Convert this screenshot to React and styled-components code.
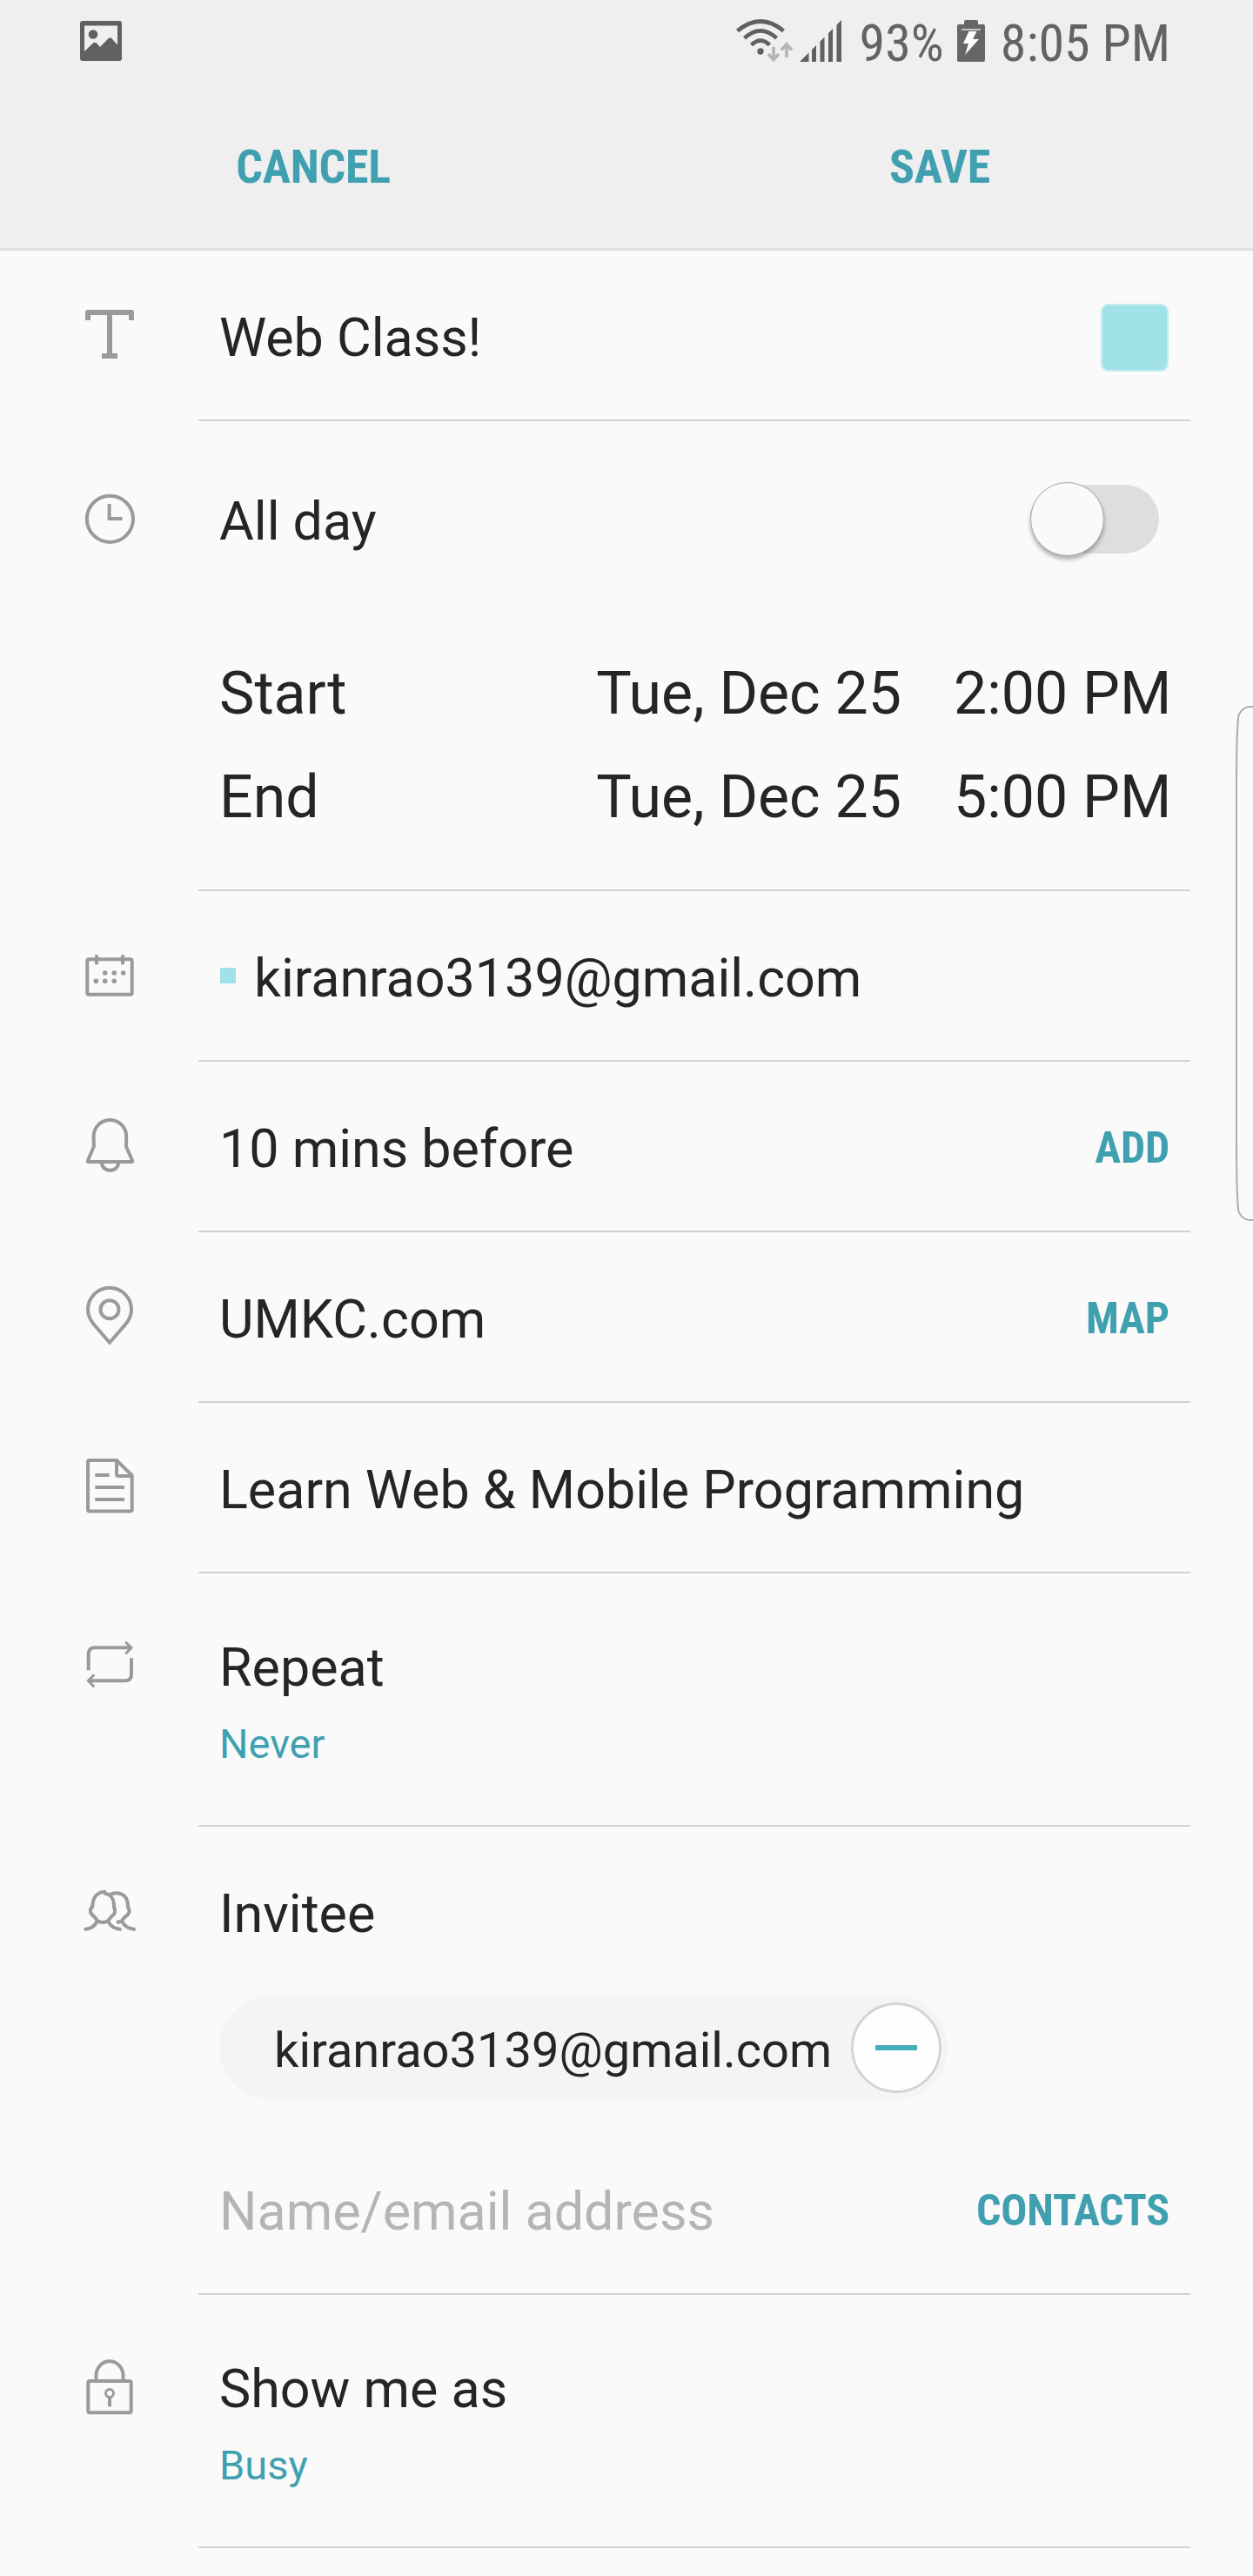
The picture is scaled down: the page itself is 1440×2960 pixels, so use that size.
import React from "react";
import styled, { createGlobalStyle, css } from "styled-components";

const Global = createGlobalStyle`
  * { box-sizing: border-box; }
  body { margin: 0; background: #fafafa; }
`;

const condensed = css`
  font-family: "Roboto Condensed", Roboto, "Liberation Sans", sans-serif;
  font-stretch: 75%;
  white-space: nowrap;
`;

const Screen = styled.main`
  width: 1440px;
  height: 2960px;
  overflow: hidden;
  position: relative;
  background: #fafafa;
  color: #252525;
  font-family: Roboto, "Liberation Sans", sans-serif;
`;

const Header = styled.header`
  height: 288px;
  background: #efefef;
  border-bottom: 3px solid #dfdfdf;
`;

const StatusBar = styled.div`
  height: 94px;
  padding: 0 95px 0 92px;
  display: flex;
  align-items: center;
  color: #636363;
`;

const StatusIcons = styled.div`
  margin-left: auto;
  display: flex;
  align-items: center;
`;

const StatusText = styled.span`
  ${condensed}
  font-size: 60px;
  line-height: 72px;
  padding-top: 5px;
  margin-left: ${(p) => p.$gap}px;
`;

const Battery = styled.svg`
  margin-left: 15px;
`;

const Actions = styled.nav`
  display: grid;
  grid-template-columns: 1fr 1fr;
  height: 191px;
`;

const Action = styled.button`
  ${condensed}
  border: 0;
  background: none;
  padding: 4px 0 0;
  color: #41a0b0;
  font-size: 54px;
  font-weight: 700;
  letter-spacing: -0.25px;
`;

const Section = styled.section`
  display: grid;
  grid-template-columns: 228px 1140px;
  height: ${(p) => p.$height || 196}px;
`;

const IconCell = styled.div`
  padding: ${(p) => p.$top || 61}px 0 0 90px;
`;

const Content = styled.div`
  border-bottom: 2px solid #d1d1d1;
  padding: ${(p) => p.$top || 0}px 24px 0;
`;

const Line = styled.div`
  display: flex;
  align-items: center;
  justify-content: space-between;
  height: ${(p) => p.$height || 194}px;
  padding-top: ${(p) => p.$top || 0}px;
  margin-bottom: ${(p) => p.$after || 0}px;
`;

const Label = styled.span`
  display: block;
  font-size: 61px;
  line-height: 72px;
  padding-top: ${(p) => p.$drop || 0}px;
  white-space: nowrap;
`;

const Sub = styled.span`
  display: block;
  margin-top: 24px;
  font-size: 47px;
  line-height: 56px;
  color: #41a0b0;
`;

const LinkButton = styled.button`
  ${condensed}
  border: 0;
  background: none;
  padding: 4px 0 0;
  color: #41a0b0;
  font-size: 50px;
  font-weight: 700;
  letter-spacing: -0.2px;
`;

const Swatch = styled.span`
  width: 78px;
  height: 78px;
  margin: 6px 1px 0 0;
  border: 2px solid #c3ecef;
  border-radius: 9px;
  background: #a1e2e8;
`;

const Track = styled.span`
  width: 142px;
  height: 79px;
  margin-right: 12px;
  display: flex;
  align-items: center;
  border-radius: 40px;
  background: #dedede;
`;

const Thumb = styled.span`
  flex: none;
  width: 85px;
  height: 85px;
  margin-left: -6px;
  border-radius: 50%;
  border: 1.5px solid #a6a6a6;
  background: #fafafa;
  box-shadow: 0 4px 5px rgba(0, 0, 0, 0.3);
`;

const When = styled.div`
  display: grid;
  grid-template-columns: 1fr auto 248px;
  column-gap: 60px;
  height: 119px;
  align-items: center;
  font-size: 68px;
  white-space: nowrap;
`;

const Time = styled.span`
  text-align: right;
`;

const Account = styled.div`
  display: flex;
  align-items: center;
  gap: 21px;
  padding-left: 1px;
`;

const Dot = styled.span`
  width: 18px;
  height: 18px;
  background: #a1e2e8;
`;

const Chip = styled.div`
  display: flex;
  align-items: center;
  justify-content: space-between;
  width: 838px;
  height: 120px;
  margin-top: 58px;
  padding: 0 8px 0 63px;
  border-radius: 60px;
  background: #f4f4f4;
  font-size: 56px;
`;

const ChipText = styled.span`
  padding-top: 5px;
`;

const Remove = styled.button`
  display: flex;
  align-items: center;
  justify-content: center;
  width: 104px;
  height: 104px;
  padding: 0;
  border: 3px solid #d4d4d4;
  border-radius: 50%;
  background: #fefefe;
`;

const Dash = styled.span`
  width: 48px;
  height: 6px;
  background: #45aebc;
`;

const Placeholder = styled(Label)`
  color: #b5b5b5;
`;

const EdgeHandle = styled.svg`
  position: absolute;
  top: 808px;
  right: 0;
`;

const Glyph = styled.svg`
  display: block;
  width: 72px;
  height: 72px;
  fill: none;
  stroke: #9a9a9a;
  stroke-width: 4;
`;

const icons = {
  title: (
    <path
      d="M8 19V10Q8 7 11 7H61Q64 7 64 10V19H58V13H39V57H45V63H27V57H33V13H14V19Z"
      fill="#9a9a9a"
      stroke="none"
    />
  ),
  clock: (
    <>
      <circle cx="36.4" cy="36.3" r="26.6" />
      <path d="M35.6 19V36H50.6" />
    </>
  ),
  calendar: (
    <>
      <rect x="10.3" y="17.3" width="51.4" height="40.4" rx="2" />
      <path d="M21 12.3V23.3M51 12.3V23.3" />
      <g fill="#9a9a9a" stroke="none">
        {[[30.7, 33], [41.3, 33], [51.7, 33], [20.3, 42.3], [30.7, 42.3], [41.3, 42.3]].map(([x, y]) => (
          <circle key={`${x}-${y}`} cx={x} cy={y} r="2.8" />
        ))}
      </g>
    </>
  ),
  bell: (
    <>
      <path d="M11 52.5L18 36Q17.6 31 17.6 25C17.6 14 26 6 36.4 6S55.2 14 55.2 25Q55.2 31 54.8 36L62 52.5Q62.6 54 61.3 54H11.7Q10.4 54 11 52.5Z" />
      <path d="M26.8 54.5C26.8 60 31 63.7 36.5 63.7S46.2 60 46.2 54.5" />
    </>
  ),
  pin: (
    <>
      <path d="M36 65.8L18 45C13 39 11 34 11 28A25 25.2 0 0 1 61 28C61 34 59 39 54 45Z" />
      <circle cx="36" cy="27.7" r="10.5" />
    </>
  ),
  note: (
    <>
      <path d="M13 5H44L61.7 22.4V61.7Q61.7 63.5 60 63.5H13Q11 63.5 11 61.7V7Q11 5 13 5Z" />
      <path d="M44 5V21Q44 23 46 23H61.7M19.3 22H35.7M19.3 36H53M19.3 50H53" />
    </>
  ),
  repeat: (
    <>
      <path d="M11.7 43.3V25Q11.7 17.3 19 17.3H60.5M61 29.3V48Q61 55.3 53.5 55.3H12" />
      <path d="M54.3 10.7L61 17.4L54.3 24.3M18.3 48.2L11.4 55.3L18.3 62.4" strokeWidth="3" />
    </>
  ),
  people: (
    <path d="M32 14C22 13 16.5 20 16.2 31Q13.2 33 14 37.2Q15 40.5 18.4 42.3L21.7 47Q28 50.8 34.2 47L38.6 41.6Q41.5 40.3 42 36.8Q42.4 33.5 41 31.5C41.2 21 37.5 17 30 15.5M21.9 47.4Q17.5 56.5 6.7 57M34.2 47.6Q38.5 56.5 49.5 57M36 17.3Q40 15 44.5 15.2C53.5 16 57.3 21.5 57 31.5Q59.5 35 58.3 37.5Q57 41 53.6 42.6L49.6 47.6L44 49M50 47.6Q54.5 56.5 65.7 57" />
  ),
  lock: (
    <>
      <rect x="11.3" y="29" width="49.4" height="36.3" rx="2" />
      <path d="M20.5 29V22.5A15.5 16.2 0 0 1 51.5 22.5V29" />
      <circle cx="36" cy="43" r="4.5" strokeWidth="3" />
      <path d="M36 47.5V58.3" />
    </>
  ),
};

const Icon = ({ name, top }) => (
  <IconCell $top={top}>
    <Glyph viewBox="0 0 72 72">{icons[name]}</Glyph>
  </IconCell>
);

const moments = [
  { label: "Start", date: "Tue, Dec 25", time: "2:00 PM" },
  { label: "End", date: "Tue, Dec 25", time: "5:00 PM" },
];

export default function App() {
  return (
    <Screen>
      <Global />
      <Header>
        <StatusBar>
          <svg width="48" height="46" viewBox="0 0 48 46">
            <path
              fillRule="evenodd"
              fill="#616161"
              d="M3 0H45Q48 0 48 3V43Q48 46 45 46H3Q0 46 0 43V3Q0 0 3 0ZM5 5.5V35L15 25.500Q17 24 19 25.500L23 30L32.500 20.200Q34.500 18.500 36.500 20.200L43 27.500V5.500Z"
            />
            <circle cx="15" cy="15.5" r="5.3" fill="#616161" />
          </svg>
          <StatusIcons>
            <svg width="122" height="50" viewBox="0 0 122 50">
              <g fill="none" stroke="#616161" strokeWidth="4.6">
                <path d="M1.5 13.6Q28 -8.6 54.5 13.6" />
                <path d="M9.5 21.8Q28 5 46.5 21.8" />
                <path d="M17.5 29.6Q28 19.5 38.5 29.6" />
              </g>
              <circle cx="28" cy="37" r="3.7" fill="#616161" />
              <g fill="none" stroke="#b4b4b4" strokeWidth="3.6">
                <path d="M43 32V46M37 40L43 46.5L49 40" />
                <path d="M58 44V30M52 35.5L58 29L64 35.5" />
              </g>
              <path
                fill="#616161"
                d="M73 49L83.5 38.5V49ZM87 35L92 30V49H87ZM96.5 25.5L101.5 20.5V49H96.5ZM106 16L111 11V49H106ZM115.5 6.500L121 1V49H115.5Z"
              />
            </svg>
            <StatusText $gap={20}>93%</StatusText>
            <Battery width="32" height="48" viewBox="0 0 32 48">
              <path fill="#666" d="M8 5V2Q8 0 10 0H22Q24 0 24 2V5H30Q32 5 32 7V46Q32 48 30 48H2Q0 48 0 46V7Q0 5 2 5Z" />
              <path stroke="#dcdcdc" strokeWidth="1.6" d="M5 11H27" />
              <path fill="#fff" d="M13.5 13H22.5L18 22H25L9 40L13 27H7Z" />
            </Battery>
            <StatusText $gap={18}>8:05 PM</StatusText>
          </StatusIcons>
        </StatusBar>
        <Actions>
          <Action>CANCEL</Action>
          <Action>SAVE</Action>
        </Actions>
      </Header>

      <Section>
        <Icon name="title" />
        <Content>
          <Line>
            <Label $drop={6}>Web Class!</Label>
            <Swatch />
          </Line>
        </Content>
      </Section>

      <Section $height={540}>
        <Icon name="clock" top={76} />
        <Content $top={64}>
          <Line $height={97} $after={92}>
            <Label $drop={4}>All day</Label>
            <Track>
              <Thumb />
            </Track>
          </Line>
          {moments.map((m) => (
            <When key={m.label}>
              <span>{m.label}</span>
              <span>{m.date}</span>
              <Time>{m.time}</Time>
            </When>
          ))}
        </Content>
      </Section>

      <Section>
        <Icon name="calendar" />
        <Content>
          <Line>
            <Account>
              <Dot />
              <Label $drop={6}>kiranrao3139@gmail.com</Label>
            </Account>
          </Line>
        </Content>
      </Section>

      <Section>
        <Icon name="bell" />
        <Content>
          <Line>
            <Label $drop={6}>10 mins before</Label>
            <LinkButton>ADD</LinkButton>
          </Line>
        </Content>
      </Section>

      <Section>
        <Icon name="pin" />
        <Content>
          <Line>
            <Label $drop={6}>UMKC.com</Label>
            <LinkButton>MAP</LinkButton>
          </Line>
        </Content>
      </Section>

      <Section>
        <Icon name="note" />
        <Content>
          <Line>
            <Label $drop={6}>Learn Web &amp; Mobile Programming</Label>
          </Line>
        </Content>
      </Section>

      <Section $height={291}>
        <Icon name="repeat" top={68} />
        <Content $top={72}>
          <Label>Repeat</Label>
          <Sub>Never</Sub>
        </Content>
      </Section>

      <Section $height={538}>
        <Icon name="people" top={61} />
        <Content $top={64}>
          <Label>Invitee</Label>
          <Chip>
            <ChipText>kiranrao3139@gmail.com</ChipText>
            <Remove>
              <Dash />
            </Remove>
          </Chip>
          <Line $height={222} $top={28}>
            <Placeholder $drop={6}>Name/email address</Placeholder>
            <LinkButton>CONTACTS</LinkButton>
          </Line>
        </Content>
      </Section>

      <Section $height={291}>
        <Icon name="lock" top={70} />
        <Content $top={72}>
          <Label>Show me as</Label>
          <Sub>Busy</Sub>
        </Content>
      </Section>

      <EdgeHandle width="22" height="600" viewBox="0 0 22 600" fill="none" stroke="#acacac" strokeWidth="2">
        <path d="M22 4H19.5Q9.5 4 5.5 14Q3 30 3 95V500Q3 570 5.5 584Q9.500 594 19.5 594H22" />
      </EdgeHandle>
    </Screen>
  );
}
